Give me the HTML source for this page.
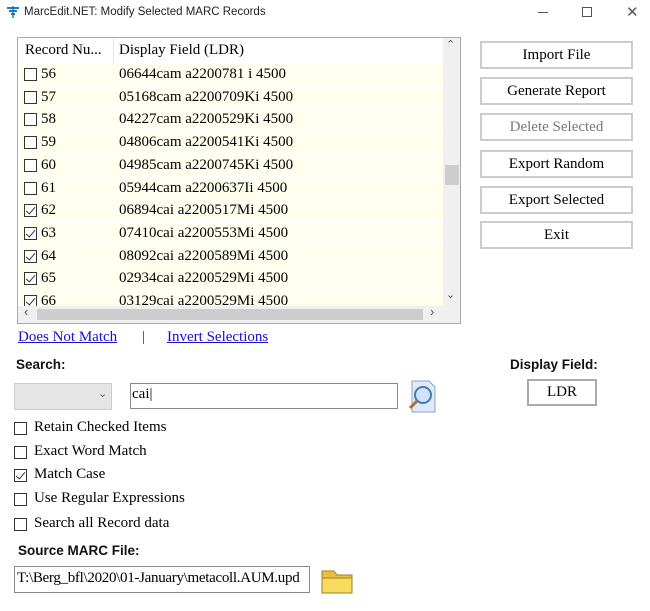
<!DOCTYPE html>
<html><head><meta charset="utf-8"><style>
*{box-sizing:border-box;margin:0;padding:0}
body{width:650px;height:611px;background:#fff;font-family:"Liberation Serif",serif;font-size:15px;color:#000;position:relative;overflow:hidden}
.a{position:absolute}
.title{left:24px;top:6px;font-family:"Liberation Sans",sans-serif;font-size:11.5px;color:#222}
.btn{position:absolute;left:480px;width:153px;border:2px solid #ccc;background:#fff;text-align:center;font-size:15px;line-height:24px}
.list{left:17px;top:37px;width:444px;height:287px;border:1px solid #aaa;overflow:hidden}
.row{position:absolute;left:2px;width:423px;height:22px;background:#fffff0;border-bottom:1px solid #fff}
.row span{position:absolute;top:2px}
.cb{position:absolute;width:13px;height:13px;border:1px solid #333;background:#fff}
.cb.c::after{content:"";position:absolute;left:3px;top:0px;width:4px;height:8px;border:solid #333;border-width:0 1.3px 1.3px 0;transform:rotate(40deg)}
.chk{position:absolute;left:14px;font-size:15px}
.chk .cb{left:0;top:3px}
.chk span{position:absolute;left:20px;white-space:nowrap}
.lbl{font-family:"Liberation Sans",sans-serif;font-weight:bold;font-size:13.5px;color:#111}
</style></head><body>
<svg class="a" style="left:6px;top:5px" width="14" height="14"><path d="M1 3h12M3 6h8M5 9h4" stroke="#1a7ac8" stroke-width="2"/><path d="M7 1v12" stroke="#1a7ac8" stroke-width="1.5"/></svg>
<div class="a title">MarcEdit.NET: Modify Selected MARC Records</div>
<div class="a" style="left:538px;top:12px;width:10px;border-top:1px solid #555"></div>
<div class="a" style="left:582px;top:7px;width:10px;height:10px;border:1px solid #555"></div>
<div class="a" style="left:626px;top:3px;font-family:'Liberation Sans';font-size:15px;color:#555">✕</div>

<div class="a list">
<div class="a" style="left:7px;top:4px">Record Nu...</div>
<div class="a" style="left:95px;top:0;height:26px;border-left:1px solid #e5e5e5"></div>
<div class="a" style="left:101px;top:4px">Display Field (LDR)</div>
<div id="rows"></div>
<div class="a" style="left:425px;top:0;width:17px;height:268px;background:#f0f0f0"></div>
<div class="a" style="left:427px;top:127px;width:14px;height:20px;background:#cdcdcd"></div>
<div class="a" style="left:428px;top:0;font-size:11px;color:#555;font-family:'Liberation Sans'">⌃</div>
<div class="a" style="left:428px;top:250px;font-size:11px;color:#555;font-family:'Liberation Sans'">⌄</div>
<div class="a" style="left:0;top:268px;width:442px;height:17px;background:#f0f0f0"></div>
<div class="a" style="left:19px;top:271px;width:386px;height:11px;background:#cdcdcd"></div>
<div class="a" style="left:6px;top:266px;font-size:13px;color:#555;font-family:'Liberation Sans'">‹</div>
<div class="a" style="left:412px;top:266px;font-size:13px;color:#555;font-family:'Liberation Sans'">›</div>
</div>
<script>
var d=[["56","06644cam a2200781 i 4500",0],["57","05168cam a2200709Ki 4500",0],["58","04227cam a2200529Ki 4500",0],["59","04806cam a2200541Ki 4500",0],["60","04985cam a2200745Ki 4500",0],["61","05944cam a2200637Ii 4500",0],["62","06894cai a2200517Mi 4500",1],["63","07410cai a2200553Mi 4500",1],["64","08092cai a2200589Mi 4500",1],["65","02934cai a2200529Mi 4500",1],["66","03129cai a2200529Mi 4500",1]];
var h="";d.forEach(function(r,i){var t=26+i*22.7;h+='<div class="row" style="top:'+t+'px;'+(i==10?'height:16px;overflow:hidden':'')+'"><div class="cb'+(r[2]?' c':'')+'" style="left:4px;top:4px"></div><span style="left:21px">'+r[0]+'</span><div style="position:absolute;left:93px;top:0;height:22px;border-left:1px solid #fff"></div><span style="left:99px">'+r[1]+'</span></div>';});
document.getElementById("rows").innerHTML=h;
</script>

<div class="btn" style="top:41px;height:28px">Import File</div>
<div class="btn" style="top:77px;height:28px">Generate Report</div>
<div class="btn" style="top:113px;height:28px;color:#777">Delete Selected</div>
<div class="btn" style="top:150px;height:28px">Export Random</div>
<div class="btn" style="top:186px;height:28px">Export Selected</div>
<div class="btn" style="top:221px;height:28px">Exit</div>

<div class="a" style="left:18px;top:329px;color:#1a0dcc;text-decoration:underline">Does Not Match</div>
<div class="a" style="left:142px;top:329px;color:#333">|</div>
<div class="a" style="left:167px;top:329px;color:#1a0dcc;text-decoration:underline">Invert Selections</div>

<div class="a lbl" style="left:16px;top:357px">Search:</div>
<div class="a lbl" style="left:510px;top:357px">Display Field:</div>
<div class="a" style="left:14px;top:383px;width:98px;height:27px;background:#e5e5e5;border:1px solid #ccc"></div>
<div class="a" style="left:98px;top:387px;font-size:11px;color:#666;font-family:'Liberation Sans'">⌄</div>
<div class="a" style="left:130px;top:383px;width:268px;height:26px;border:1px solid #888"></div>
<div class="a" style="left:132px;top:386px">cai|</div>
<svg class="a" style="left:406px;top:379px" width="32" height="35"><path d="M6 2h17l6 6v25H6z" fill="#dde8f8" stroke="#8aa4c8"/><circle cx="17" cy="16" r="8" fill="#cfe4fb" stroke="#4a78b0" stroke-width="2"/><path d="M11 22l-7 7" stroke="#b07030" stroke-width="3"/></svg>
<div class="a" style="left:527px;top:379px;width:70px;height:27px;border:2px solid #aaa;text-align:center;line-height:23px">LDR</div>

<div class="chk" style="top:419px"><div class="cb"></div><span>Retain Checked Items</span></div>
<div class="chk" style="top:443px"><div class="cb"></div><span>Exact Word Match</span></div>
<div class="chk" style="top:466px"><div class="cb c"></div><span>Match Case</span></div>
<div class="chk" style="top:490px"><div class="cb"></div><span>Use Regular Expressions</span></div>
<div class="chk" style="top:515px"><div class="cb"></div><span>Search all Record data</span></div>

<div class="a lbl" style="left:18px;top:543px">Source MARC File:</div>
<div class="a" style="left:14px;top:566px;width:296px;height:27px;border:1px solid #888;overflow:hidden;white-space:nowrap;padding:3px 0 0 2px;letter-spacing:-0.3px">T:\Berg_bfl\2020\01-January\metacoll.AUM.upd</div>
<svg class="a" style="left:320px;top:566px" width="36" height="30"><path d="M2 5h12l3 4h15v18H2z" fill="#e8c040" stroke="#a08020"/><path d="M2 12h30v15H2z" fill="#f8dc60" stroke="#a08020"/></svg>
</body></html>
